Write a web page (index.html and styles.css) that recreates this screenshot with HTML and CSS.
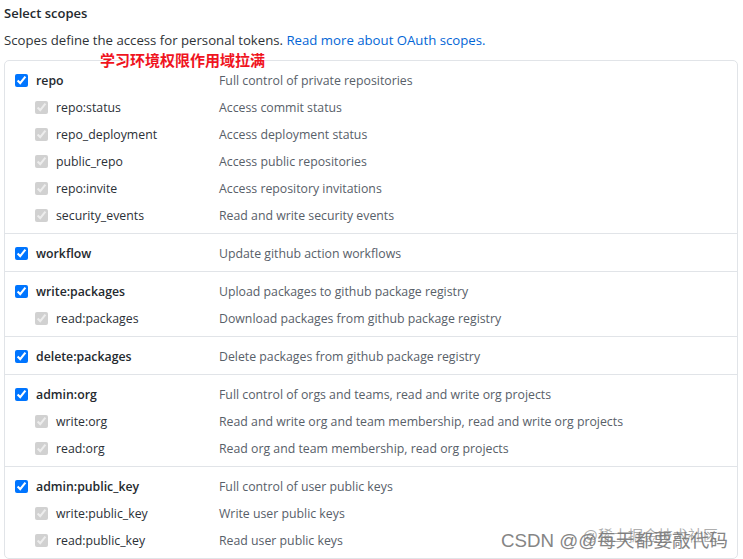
FILE: index.html
```html
<!DOCTYPE html>
<html lang="en">
<head>
<meta charset="utf-8">
<link rel="stylesheet" href="styles.css">
</head>
<body>
<div class="page">
  <h3 class="title">Select scopes</h3>
  <p class="intro">Scopes define the access for personal tokens. <a href="#">Read more about OAuth scopes.</a></p>
  <div class="scopes">
    <span class="note">学习环境权限作用域拉满</span>
    <div class="group">
      <label class="row parent"><input type="checkbox" checked><span class="name">repo</span><span class="desc">Full control of private repositories</span></label>
      <label class="row child"><input type="checkbox" checked disabled><span class="name">repo:status</span><span class="desc">Access commit status</span></label>
      <label class="row child"><input type="checkbox" checked disabled><span class="name">repo_deployment</span><span class="desc">Access deployment status</span></label>
      <label class="row child"><input type="checkbox" checked disabled><span class="name">public_repo</span><span class="desc">Access public repositories</span></label>
      <label class="row child"><input type="checkbox" checked disabled><span class="name">repo:invite</span><span class="desc">Access repository invitations</span></label>
      <label class="row child"><input type="checkbox" checked disabled><span class="name">security_events</span><span class="desc">Read and write security events</span></label>
    </div>
    <div class="group">
      <label class="row parent"><input type="checkbox" checked><span class="name">workflow</span><span class="desc">Update github action workflows</span></label>
    </div>
    <div class="group">
      <label class="row parent"><input type="checkbox" checked><span class="name">write:packages</span><span class="desc">Upload packages to github package registry</span></label>
      <label class="row child"><input type="checkbox" checked disabled><span class="name">read:packages</span><span class="desc">Download packages from github package registry</span></label>
    </div>
    <div class="group">
      <label class="row parent"><input type="checkbox" checked><span class="name">delete:packages</span><span class="desc">Delete packages from github package registry</span></label>
    </div>
    <div class="group">
      <label class="row parent"><input type="checkbox" checked><span class="name">admin:org</span><span class="desc">Full control of orgs and teams, read and write org projects</span></label>
      <label class="row child"><input type="checkbox" checked disabled><span class="name">write:org</span><span class="desc">Read and write org and team membership, read and write org projects</span></label>
      <label class="row child"><input type="checkbox" checked disabled><span class="name">read:org</span><span class="desc">Read org and team membership, read org projects</span></label>
    </div>
    <div class="group">
      <label class="row parent"><input type="checkbox" checked><span class="name">admin:public_key</span><span class="desc">Full control of user public keys</span></label>
      <label class="row child"><input type="checkbox" checked disabled><span class="name">write:public_key</span><span class="desc">Write user public keys</span></label>
      <label class="row child"><input type="checkbox" checked disabled><span class="name">read:public_key</span><span class="desc">Read user public keys</span></label>
    </div>
    <div class="watermark">
      <span class="wm-main">CSDN @@每天都要敲代码</span>
      <span class="wm-over">@稀土掘金技术社区</span>
    </div>
  </div>
</div>
</body>
</html>
```

FILE: styles.css
```css
html, body {
  margin: 0;
  padding: 0;
  background: #fff;
}
body {
  font-family: "Open Sans", "Noto Sans CJK SC", sans-serif;
  font-size: 12.3px;
  color: #24292e;
  overflow: hidden;
}
.page {
  padding: 4px 5px 0 4px;
}
.title {
  margin: 0;
  height: 19px;
  line-height: 19px;
  font-size: 13px;
  font-weight: 600;
}
.intro {
  margin: 8px 0 0;
  height: 19px;
  line-height: 19px;
  font-size: 13.2px;
  color: #2f3337;
}
.intro a {
  color: #0366d6;
  text-decoration: none;
}
.scopes {
  position: relative;
  margin-top: 10px;
  border: 1px solid #e1e4e8;
  border-radius: 5px;
}
.note {
  position: absolute;
  left: 95px;
  top: -12px;
  font-size: 15px;
  font-weight: 700;
  color: #f0141e;
  line-height: 22px;
  font-family: "Noto Sans CJK SC", sans-serif;
}
.group {
  padding: 6px 0 4px;
  border-top: 1px solid #e1e4e8;
}
.group:first-of-type {
  border-top: 0;
}
.row {
  display: flex;
  align-items: center;
  height: 27px;
}
.row input {
  margin: 0;
  width: 13px;
  height: 13px;
  flex: none;
}
.parent {
  padding-left: 10px;
}
.child {
  padding-left: 30px;
}
.name {
  margin-left: 8px;
  flex: none;
}
.parent .name {
  width: 183px;
  font-weight: 600;
}
.child .name {
  width: 163px;
  color: #2b3036;
}
.desc {
  color: #586069;
}
.watermark {
  position: absolute;
  right: 9px;
  bottom: 6px;
  width: 240px;
  height: 28px;
  font-family: "Liberation Sans", "Noto Sans CJK SC", sans-serif;
  pointer-events: none;
}
.wm-main {
  position: absolute;
  right: 0;
  bottom: 0;
  font-size: 18.7px;
  line-height: 22px;
  color: #858585;
  white-space: nowrap;
}
.wm-over {
  position: absolute;
  right: 10px;
  bottom: 7px;
  font-size: 15px;
  line-height: 18px;
  color: rgba(120, 120, 120, 0.6);
  white-space: nowrap;
}
```
